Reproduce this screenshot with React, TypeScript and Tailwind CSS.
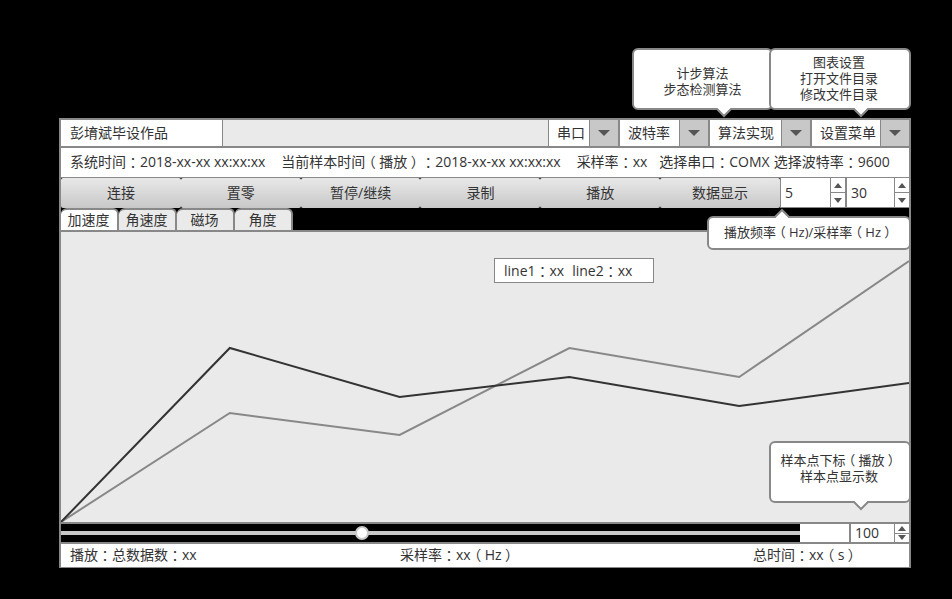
import { useState } from 'react';
import type { ReactNode } from 'react';

const FONT = "font-['Open_Sans','Noto_Sans_CJK_SC',sans-serif]";

/* Full-width punctuation is set centred in a square em box. */
function Label({ children }: { children: string }) {
  return (
    <>
      {children.split(/([：（）])/).map((part, i) =>
        i % 2 === 1 ? (
          <span
            key={i}
            className="inline-block w-[1em] text-center font-['Noto_Sans_CJK_SC',sans-serif] leading-none [font-feature-settings:'halt']"
          >
            {part}
          </span>
        ) : (
          part
        ),
      )}
    </>
  );
}

function Dropdown({ label, className }: { label: string; className: string }) {
  return (
    <div className={`relative flex shrink-0 border-[#888] ${className}`}>
      <select
        aria-label={label}
        className="min-w-0 flex-1 appearance-none bg-white pr-7 pb-px pl-2 text-sm outline-none"
      >
        <option>{label}</option>
      </select>
      <span className="pointer-events-none absolute inset-y-0 right-0 flex w-[29px] items-center justify-center border-l border-[#888] bg-[#c8c8c8]">
        <svg width="12" height="6" viewBox="0 0 12 6" aria-hidden="true">
          <path d="M0 0H12L6 6Z" fill="#555" />
        </svg>
      </span>
    </div>
  );
}

function Spinner({ label, initial, className }: { label: string; initial: number; className: string }) {
  const [value, setValue] = useState(initial);
  return (
    <div className={`flex min-w-0 shrink-0 border-[#888] bg-white ${className}`}>
      <input
        aria-label={label}
        inputMode="numeric"
        value={value}
        onChange={(e) => setValue(Number(e.target.value) || 0)}
        className="min-w-0 flex-1 bg-white pl-1 text-sm outline-none"
      />
      <div className="flex w-[15px] flex-col border-l border-[#888]">
        <button
          type="button"
          aria-label={`${label} +`}
          onClick={() => setValue(value + 1)}
          className="flex min-h-0 flex-1 items-center justify-center border-b border-[#888]"
        >
          <svg width="8" height="5" viewBox="0 0 8 5" aria-hidden="true">
            <path d="M0 5H8L4 0Z" fill="#555" />
          </svg>
        </button>
        <button
          type="button"
          aria-label={`${label} -`}
          onClick={() => setValue(value - 1)}
          className="flex min-h-0 flex-1 items-center justify-center"
        >
          <svg width="8" height="5" viewBox="0 0 8 5" aria-hidden="true">
            <path d="M0 0H8L4 5Z" fill="#555" />
          </svg>
        </button>
      </div>
    </div>
  );
}

function Callout({
  className,
  tail,
  up = false,
  children,
}: {
  className: string;
  tail: string;
  up?: boolean;
  children: ReactNode;
}) {
  return (
    <div
      className={`absolute flex flex-col items-center justify-center rounded-md border-2 border-[#888] bg-white text-[13px] leading-4 whitespace-nowrap ${className}`}
    >
      {children}
      <svg
        width="18"
        height="10"
        viewBox="0 0 18 10"
        aria-hidden="true"
        className={`absolute ${up ? 'bottom-full rotate-180' : 'top-full'} ${tail}`}
      >
        <path d="M2 0L9 8L16 0Z" fill="#fff" />
        <path d="M1 1H2L9 8L16 1H17" fill="none" stroke="#888" strokeWidth="2" />
        <path d="M3 0H15L13 2H5Z" fill="#fff" />
      </svg>
    </div>
  );
}

const actions = ['连接', '置零', '暂停/继续', '录制', '播放', '数据显示'];
const tabs = ['加速度', '角速度', '磁场', '角度'];

export default function App() {
  const [tab, setTab] = useState(0);
  const [position, setPosition] = useState(406);

  return (
    <div className={`min-h-screen bg-black pt-[118px] pr-[41px] pl-[59px] text-sm text-[#333] ${FONT}`}>
      <main className="relative border-x-2 border-[#888]">
        <header className="flex h-[30px] border-y-2 border-[#888] bg-[#eaeaea]">
          <h1 className="flex w-[162px] items-center border-r border-[#888] bg-white pb-px pl-[9px]">
            彭堉斌毕设作品
          </h1>
          <div className="flex-1" />
          <Dropdown label="串口" className="w-[70px] border-l" />
          <Dropdown label="波特率" className="w-[90px] border-l-2" />
          <Dropdown label="算法实现" className="w-[102px] border-l-2" />
          <Dropdown label="设置菜单" className="w-[99px] border-l-2" />
        </header>

        <section className="flex h-[30px] items-center overflow-hidden border-b border-[#888] bg-white pb-[2px] pl-[9px] whitespace-nowrap">
          <span className="mr-4">
            <Label>系统时间：2018-xx-xx xx:xx:xx</Label>
          </span>
          <span className="mr-4">
            <Label>当前样本时间（播放）：2018-xx-xx xx:xx:xx</Label>
          </span>
          <span className="mr-3">
            <Label>采样率：xx</Label>
          </span>
          <span className="mr-1">
            <Label>选择串口：COMX</Label>
          </span>
          <span>
            <Label>选择波特率：9600</Label>
          </span>
        </section>

        <div className="flex h-[30px]">
          {actions.map((a) => (
            <button
              key={a}
              type="button"
              className="flex-1 rounded-xs bg-linear-to-b from-[#e8e8e8] to-[#c8c8c8]"
            >
              {a}
            </button>
          ))}
          <Spinner label="播放频率" initial={5} className="w-[65px] border-b border-l" />
          <Spinner label="采样率" initial={30} className="w-16 border-b border-l-2" />
        </div>

        <div role="tablist" className="flex h-[22px] pr-[2px]">
          {tabs.map((t, i) => (
            <button
              key={t}
              type="button"
              role="tab"
              aria-selected={tab === i}
              onClick={() => setTab(i)}
              className={`w-[58px] rounded-t-md border-t-2 border-r-2 border-[#888] pr-px pb-[2px] ${
                tab === i ? 'bg-white' : 'bg-[#eaeaea]'
              }`}
            >
              {t}
            </button>
          ))}
        </div>

        <section className="relative h-[294px] border-y-2 border-[#888] bg-[#eaeaea]">
          <svg
            viewBox="0 0 849 290"
            preserveAspectRatio="none"
            className="block h-full w-full"
            role="img"
            aria-label="line1 line2"
          >
            <g fill="none" strokeWidth="2">
              <polyline stroke="#888" points="0,290 169,181 339,203 509,116 679,145 849,29" />
              <polyline stroke="#333" points="0,290 169,116 339,165 509,145 679,174 849,151" />
            </g>
          </svg>
          <div className="absolute top-[26px] right-[255px] flex h-[25px] w-40 items-center gap-2 border border-[#888] bg-white pl-[9px] whitespace-nowrap">
            <span>
              <Label>line1：xx</Label>
            </span>
            <span>
              <Label>line2：xx</Label>
            </span>
          </div>
        </section>

        <div className="flex h-5 border-b-2 border-[#888]">
          <input
            type="range"
            min={0}
            max={1000}
            value={position}
            onChange={(e) => setPosition(Number(e.target.value))}
            aria-label="播放"
            className="h-[18px] min-w-0 flex-1 appearance-none bg-black [&::-webkit-slider-runnable-track]:h-1 [&::-webkit-slider-runnable-track]:bg-[#c8c8c8] [&::-webkit-slider-thumb]:-mt-[5px] [&::-webkit-slider-thumb]:size-[14px] [&::-webkit-slider-thumb]:appearance-none [&::-webkit-slider-thumb]:rounded-full [&::-webkit-slider-thumb]:border-2 [&::-webkit-slider-thumb]:border-[#c8c8c8] [&::-webkit-slider-thumb]:bg-white"
          />
          <input aria-label="样本点下标" className="w-[49px] bg-white px-1 outline-none" />
          <Spinner label="样本点显示数" initial={100} className="w-[60px] border-l-2" />
        </div>

        <footer className="grid h-6 grid-cols-[330fr_353fr_156fr] items-center border-b border-[#888] bg-white pb-[2px] pl-[9px]">
          <span>
            <Label>播放：总数据数：xx</Label>
          </span>
          <span>
            <Label>采样率：xx（Hz）</Label>
          </span>
          <span>
            <Label>总时间：xx（s）</Label>
          </span>
        </footer>

        <Callout className="-top-[70px] right-[136px] h-[62px] w-[141px] pt-1" tail="right-[38px]">
          <span>计步算法</span>
          <span>步态检测算法</span>
        </Callout>
        <Callout className="-top-[70px] -right-[2px] h-[62px] w-[142px] pr-[2px] pb-[2px]" tail="right-[39px]">
          <span>图表设置</span>
          <span>打开文件目录</span>
          <span>修改文件目录</span>
        </Callout>
        <Callout className="top-[98px] -right-[2px] h-[34px] w-[204px] pb-[2px]" tail="left-[64px]" up>
          <span>
            <Label>播放频率（Hz)/采样率（Hz）</Label>
          </span>
        </Callout>
        <Callout className="top-[323px] -right-[2px] h-[62px] w-[142px] pr-[2px] pb-2" tail="right-[39px]">
          <span>
            <Label>样本点下标（播放）</Label>
          </span>
          <span>样本点显示数</span>
        </Callout>
      </main>
    </div>
  );
}
